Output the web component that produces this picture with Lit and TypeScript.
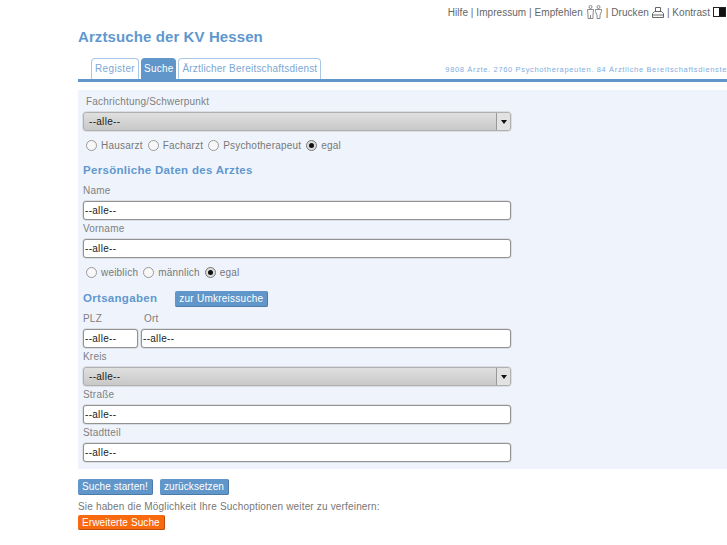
import { LitElement, html, css } from "lit";
import { customElement } from "lit/decorators.js";

@customElement("app-root")
export class AppRoot extends LitElement {
  static styles = css`
    :host { display: block; width: 727px; height: 545px; overflow: hidden; background: #fff; font-family: "Liberation Sans", Arial, sans-serif; font-size: 10px; color: #777; letter-spacing: 0.2px; }
    .page { margin-left: 78px; display: flex; flex-direction: column; }
    .top { height: 22px; box-sizing: border-box; padding: 2px 1px 0 0; display: flex; justify-content: flex-end; align-items: center; gap: 3px; color: #666; white-space: nowrap; letter-spacing: 0.05px; }
    .top svg { display: block; flex: none; }
    h1 { margin: 6px 0 0; height: 18px; line-height: 18px; font-size: 15px; font-weight: bold; color: #5f98cf; letter-spacing: 0.1px; }
    .tabbar { margin-top: 12px; height: 21px; display: flex; align-items: flex-end; padding-left: 13px; border-bottom: 3px solid #6096c9; gap: 2px; }
    .tab { height: 20px; line-height: 20px; padding: 0 3px; border: 1px solid #a8c8e8; border-bottom: none; border-radius: 4px 4px 0 0; color: #7ba8d4; white-space: nowrap; }
    .tab.reg { letter-spacing: 0.35px; }
    .tab.active { background: #6096c9; color: #fff; border-color: #6096c9; padding: 0 2px; letter-spacing: 0.2px; }
    .stats { margin-left: auto; align-self: center; font-size: 7.5px; color: #80aee0; letter-spacing: 0.65px; white-space: nowrap; padding-top: 2px; }
    .panel { margin-top: 8px; width: 649px; height: 379px; background: #eff4fc; box-sizing: border-box; padding: 5px 0 0 5px; display: flex; flex-direction: column; }
    .panel > * { flex: none; }
    .field { width: 428px; box-sizing: border-box; height: 19px; border: 1px solid #929292; border-radius: 3px; box-shadow: 0 0 0 0.5px #c8c8c8; background: #fff; color: #222; display: flex; align-items: center; padding-left: 1px; letter-spacing: 0.3px; margin-top: 5px; }
    .select { background: linear-gradient(#e0e0e0, #c8c8c8); padding: 0; border-color: #b0b0b0; justify-content: space-between; }
    .select .val { padding-left: 5px; }
    .arrow { width: 13px; height: 100%; border-left: 1px solid #999; display: flex; align-items: center; justify-content: center; background: #e2e2e2; border-radius: 0 2px 2px 0; }
    .arrow i { display: block; width: 0; height: 0; border: 3.5px solid transparent; border-top: 4px solid #111; border-bottom: none; }
    .l { display: block; height: 11px; line-height: 11px; margin-top: 3px; color: #808080; }
    .first { margin-top: 1px; padding-left: 3px; }
    .radios { display: flex; align-items: center; height: 14px; margin: 7px 0 0 3px; gap: 4px; }
    .radio { width: 9px; height: 9px; border-radius: 50%; border: 1px solid #999; background: #f8f8f8; display: flex; align-items: center; justify-content: center; flex: none; }
    .radio.on { border-color: #777; background: #ddd; }
    .radio.on::after { content: ""; width: 5px; height: 5px; border-radius: 50%; background: #111; }
    .radio-label { margin-right: 1px; }
    h2 { margin: 0; font-size: 11.5px; font-weight: bold; color: #5f98cf; letter-spacing: 0.3px; }
    .h-pers { margin-top: 12px; height: 12px; line-height: 12px; }
    .name { margin-top: 9px; }
    .ort { display: flex; align-items: center; margin-top: 11px; height: 17px; }
    .ort h2 { position: relative; top: -1px; }
    .btn { display: inline-block; height: 16px; line-height: 16px; box-sizing: border-box; background: #6096c9; color: #fff; border-radius: 2px; border-right: 1px solid #4d7ba8; border-bottom: 1px solid #4d7ba8; padding: 0 4px; white-space: nowrap; letter-spacing: 0.1px; }
    .ort .btn { margin-left: 18px; letter-spacing: 0.25px; }
    .labels { display: flex; height: 11px; line-height: 11px; margin-top: 6px; color: #808080; }
    .labels span:first-child { width: 61px; }
    .plzrow { display: flex; gap: 3px; }
    .plz { width: 55px; }
    .ortf { width: 370px; }
    .actions { margin-top: 10px; display: flex; gap: 7px; }
    .hint { margin-top: 6px; height: 12px; line-height: 12px; letter-spacing: 0.17px; white-space: nowrap; }
    .more { margin-top: 2px; align-self: flex-start; background: #f96a0e; border-color: #b94f0a; height: 15px; line-height: 15px; letter-spacing: 0.1px; }
  `;

  private radios(items: string[]) {
    return html`<div class="radios">${items.map((t, i) => html`<span class="radio ${i === items.length - 1 ? "on" : ""}"></span><span class="radio-label">${t}</span>`)}</div>`;
  }

  private select() {
    return html`<div class="field select"><span class="val">--alle--</span><span class="arrow"><i></i></span></div>`;
  }

  render() {
    return html`
      <div class="page">
        <div class="top">
          <span>Hilfe | Impressum | Empfehlen</span>
          <svg width="17" height="15" viewBox="0 0 17 15" fill="none" stroke="#8a8a8a" stroke-width="1">
            <circle cx="4.5" cy="2" r="1.5"/><path d="M1.5 4.5h6L7 10v3.5H2V10zM4.5 10v3.5"/>
            <circle cx="12.5" cy="2" r="1.5"/><path d="M9.5 4.5h6v2L14 10v3.5h-3V10L9.5 6.5z"/>
          </svg>
          <span>| Drucken</span>
          <svg width="12" height="11" viewBox="0 0 12 11" fill="none" stroke="#666" stroke-width="1">
            <path d="M3.5 4.5V.5h5v4M.5 10.5V6.5l2-2h7l2 2v4zM.5 8h11"/>
          </svg>
          <span>| Kontrast</span>
          <svg width="13" height="10" viewBox="0 0 13 10"><rect x=".5" y=".5" width="12" height="9" fill="#fff" stroke="#222"/><rect x="6" y="1" width="6" height="8" fill="#111"/></svg>
        </div>
        <h1>Arztsuche der KV Hessen</h1>
        <div class="tabbar">
          <span class="tab reg">Register</span>
          <span class="tab active">Suche</span>
          <span class="tab">Ärztlicher Bereitschaftsdienst</span>
          <span class="stats">9808 Ärzte. 2760 Psychotherapeuten. 84 Ärztliche Bereitschaftsdienste</span>
        </div>
        <div class="panel">
          <label class="l first">Fachrichtung/Schwerpunkt</label>
          ${this.select()}
          ${this.radios(["Hausarzt", "Facharzt", "Psychotherapeut", "egal"])}
          <h2 class="h-pers">Persönliche Daten des Arztes</h2>
          <label class="l name">Name</label>
          <div class="field">--alle--</div>
          <label class="l">Vorname</label>
          <div class="field">--alle--</div>
          ${this.radios(["weiblich", "männlich", "egal"])}
          <div class="ort"><h2>Ortsangaben</h2><span class="btn">zur Umkreissuche</span></div>
          <div class="labels"><span>PLZ</span><span>Ort</span></div>
          <div class="plzrow"><div class="field plz">--alle--</div><div class="field ortf">--alle--</div></div>
          <label class="l">Kreis</label>
          ${this.select()}
          <label class="l">Straße</label>
          <div class="field">--alle--</div>
          <label class="l">Stadtteil</label>
          <div class="field">--alle--</div>
        </div>
        <div class="actions"><span class="btn">Suche starten!</span><span class="btn">zurücksetzen</span></div>
        <div class="hint">Sie haben die Möglichkeit Ihre Suchoptionen weiter zu verfeinern:</div>
        <span class="btn more">Erweiterte Suche</span>
      </div>
    `;
  }
}
